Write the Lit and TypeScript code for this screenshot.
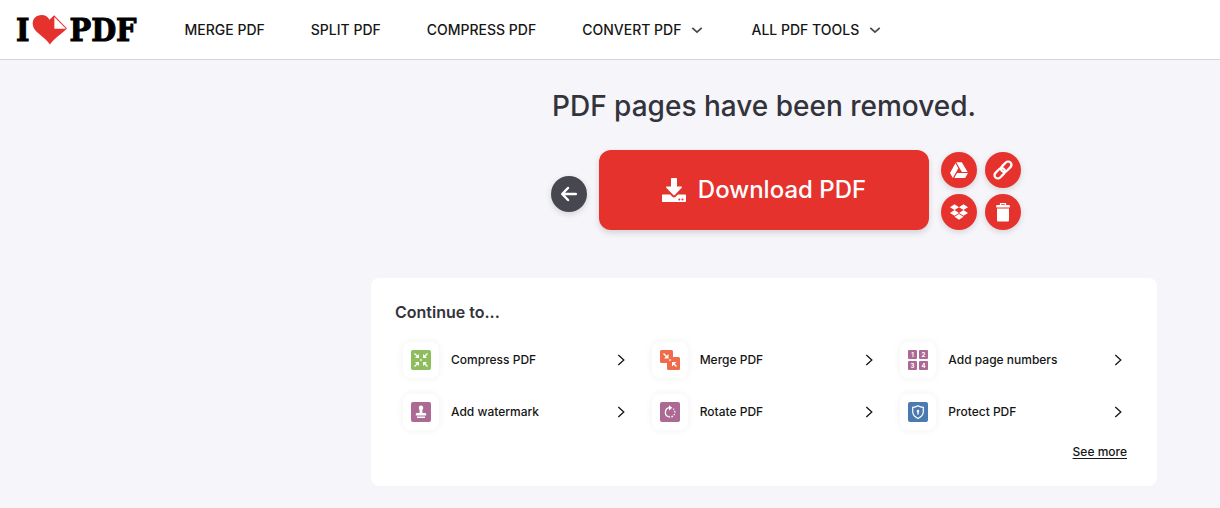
import { LitElement, html, css, svg } from "lit";
import { customElement, property } from "lit/decorators.js";

const icons: Record<string, unknown> = {
  compress: svg`
    <rect width="20" height="20" rx="2" fill="#8fbc5d"/>
    <g stroke="#fff" stroke-width="1.3" fill="none">
      <path d="M3.5 3.5 7 7M16.5 3.5 13 7M3.5 16.5 7 13M16.5 16.5 13 13"/>
    </g>
    <g fill="#fff">
      <path d="M8 4v4H4zM12 4v4h4zM8 16v-4H4zM12 16v-4h4z"/>
      <rect x="9.2" y="9.2" width="1.6" height="1.6"/>
    </g>`,
  merge: svg`
    <path d="M1.5 0h10A1.5 1.5 0 0 1 13 1.5V7h5.500A1.5 1.5 0 0 1 20 8.500v10a1.5 1.5 0 0 1-1.5 1.5h-10A1.5 1.5 0 0 1 7 18.500V13H1.5A1.5 1.5 0 0 1 0 11.500v-10A1.5 1.5 0 0 1 1.5 0z" fill="#f06b4c"/>
    <path d="M3.500 3.500 7 7M16.500 16.500 13 13" stroke="#fff" stroke-width="1.4"/>
    <path d="M8.500 4v4.500H4zM12 16.500V12h4.500z" fill="#fff"/>
    <rect x="9.3" y="9.3" width="1.5" height="1.5" fill="#fff"/>`,
  numbers: svg`
    <g fill="#ab6993">
      <rect width="9" height="9" rx="1"/><rect x="11" width="9" height="9" rx="1"/>
      <rect y="11" width="9" height="9" rx="1"/><rect x="11" y="11" width="9" height="9" rx="1"/>
    </g>
    <g class="digits">
      <text x="4.5" y="6.700">1</text><text x="15.5" y="6.700">2</text>
      <text x="4.5" y="17.700">3</text><text x="15.5" y="17.700">4</text>
    </g>`,
  watermark: svg`
    <rect width="20" height="20" rx="2" fill="#ab6993"/>
    <path d="M10 3.600a2.200 2.200 0 0 1 2.200 2.300c0 1-.8 1.500-.8 2.500v2.700h2.600a1.200 1.200 0 0 1 1.200 1.200v1.300H4.800v-1.300A1.200 1.200 0 0 1 6 11.100h2.600V8.400c0-1-.8-1.500-.8-2.500A2.200 2.200 0 0 1 10 3.600zM6 14.400h8v1.500H6z" fill="#fff"/>`,
  rotate: svg`
    <rect width="20" height="20" rx="2" fill="#ab6993"/>
    <path d="M10.500 5.600A4.700 4.700 0 0 0 8.500 14.700" fill="none" stroke="#fff" stroke-width="1.3"/>
    <path d="M8.500 14.700A4.700 4.700 0 0 0 13.300 6.800" fill="none" stroke="#fff" stroke-width="1.3" stroke-dasharray="1.600 1.300"/>
    <path d="M9 3.200 12.200 5.700 9 8.400z" fill="#fff"/>`,
  protect: svg`
    <rect width="20" height="20" rx="2" fill="#4a7aaf"/>
    <path d="M10 3.800c1.600 1 3.300 1.500 5.300 1.600v4.200c0 3.200-2 5.400-5.300 6.900-3.300-1.500-5.300-3.700-5.300-6.900V5.400C6.700 5.300 8.400 4.800 10 3.800z" fill="none" stroke="#fff" stroke-width="1.2"/>
    <path d="M10 7.800a1.300 1.300 0 0 1 .7 2.400v2.300H9.300v-2.300A1.300 1.300 0 0 1 10 7.800z" fill="#fff"/>`,
};

const tools = [
  ["compress", "Compress PDF"],
  ["merge", "Merge PDF"],
  ["numbers", "Add page numbers"],
  ["watermark", "Add watermark"],
  ["rotate", "Rotate PDF"],
  ["protect", "Protect PDF"],
];

@customElement("tool-link")
export class ToolLink extends LitElement {
  @property() icon = "";
  @property() label = "";

  static styles = css`
    :host { display: block; }
    .tool {
      display: flex;
      align-items: center;
      gap: 12px;
      padding: 8px;
      color: #161616;
      text-decoration: none;
      font-size: 12px;
      font-weight: 500;
      line-height: 20px;
    }
    .tile {
      display: grid;
      place-items: center;
      width: 36px;
      height: 36px;
      border-radius: 8px;
      background: #fff;
      box-shadow: 0 0 8px rgba(0, 0, 0, 0.06);
    }
    .label { flex: 1; }
    .digits {
      fill: #fff;
      font-size: 6px;
      font-weight: 700;
      text-anchor: middle;
    }
  `;

  render() {
    return html`
      <a class="tool" href="#">
        <span class="tile">
          <svg width="20" height="20" viewBox="0 0 20 20" aria-hidden="true">${icons[this.icon]}</svg>
        </span>
        <span class="label">${this.label}</span>
        <svg width="16" height="16" viewBox="0 0 16 16" fill="none" stroke="#161616" stroke-width="1.3" aria-hidden="true">
          <path d="M6.300 3 11.800 8l-5.500 5"/>
        </svg>
      </a>
    `;
  }
}

@customElement("app-root")
export class AppRoot extends LitElement {
  static styles = css`
    :host {
      display: block;
      min-height: 100vh;
      background: #f5f5fa;
      color: #33333b;
      font-family: Inter, "Liberation Sans", sans-serif;
    }
    * { box-sizing: border-box; }
    button { font: inherit; color: inherit; border: 0; cursor: pointer; }
    .header {
      display: flex;
      align-items: center;
      gap: 48px;
      height: 60px;
      padding: 0 16px;
      background: #fff;
      border-bottom: 1px solid #d6d6df;
    }
    .logo {
      display: flex;
      align-items: center;
      gap: 1px;
      color: #000;
      font: 700 32px/36px "DejaVu Serif Condensed", "DejaVu Serif", serif;
      -webkit-text-stroke: 1px #000;
      text-decoration: none;
    }
    .nav {
      display: flex;
      gap: 46px;
      color: #161616;
      font-size: 14px;
      font-weight: 500;
      line-height: 20px;
      white-space: nowrap;
    }
    .nav-item {
      display: flex;
      align-items: center;
      gap: 8px;
      padding: 0;
      background: none;
      color: inherit;
      text-decoration: none;
    }
    .main {
      margin-left: 308px;
      padding: 28px 24px 22px;
    }
    .title {
      margin: 0 0 26px;
      text-align: center;
      font-size: 28px;
      font-weight: 500;
      line-height: 36px;
    }
    .actions {
      display: grid;
      grid-template-columns: 1fr auto 1fr;
      gap: 12px;
      align-items: end;
      margin-bottom: 48px;
    }
    .round {
      display: grid;
      place-items: center;
      width: 36px;
      height: 36px;
      padding: 0;
      border-radius: 50%;
      background: #e5322d;
      box-shadow: 0 2px 6px rgba(0, 0, 0, 0.14);
    }
    .back {
      place-self: center end;
      margin-top: 8px;
      background: #47474f;
    }
    .download {
      display: flex;
      align-items: center;
      justify-content: center;
      gap: 12px;
      min-width: 330px;
      height: 80px;
      padding: 0 48px;
      border-radius: 12px;
      background: #e5322d;
      box-shadow: 0 3px 6px rgba(0, 0, 0, 0.14);
      color: #fff;
      font-size: 24px;
      font-weight: 500;
      line-height: 32px;
      text-decoration: none;
    }
    .side {
      display: grid;
      grid-template-columns: auto auto;
      gap: 6px 8px;
      justify-content: start;
    }
    .card {
      max-width: 786px;
      margin: 0 auto;
      padding: 24px;
      border-radius: 8px;
      background: #fff;
    }
    .card-title {
      margin: 0 0 11px;
      font-size: 16px;
      font-weight: 600;
      line-height: 21px;
    }
    .tools {
      display: grid;
      grid-template-columns: repeat(3, 1fr);
      column-gap: 8px;
    }
    .more {
      display: flex;
      justify-content: flex-end;
      padding: 4px 6px 0 0;
      font-size: 12px;
      font-weight: 500;
      line-height: 20px;
    }
    .more-link { color: #161616; text-underline-offset: 2px; }
  `;

  private chevron = html`
    <svg width="16" height="16" viewBox="0 0 16 16" fill="none" stroke="#47474f" stroke-width="1.7" aria-hidden="true">
      <path d="m3.300 5.800 4.700 4.400 4.700-4.400"/>
    </svg>`;

  render() {
    return html`
      <header class="header">
        <a class="logo" href="#" aria-label="I love PDF">
          <span>I</span>
          <svg width="38" height="32" viewBox="30 14 38 32" aria-hidden="true">
            <path d="M50 44.500C47 40 43 37.500 38 33c-3.500-3-5.300-6-5.300-9.500C32.700 18.500 36.500 15 41.500 15c3.800 0 6.500 1.700 8 4.800L54.200 15.300 67 28.500C61.500 34 54 38.500 50 44.500z" fill="#e5322d"/>
            <path d="M54.400 17v11.800h11.500z" fill="#fff"/>
          </svg>
          <span>PDF</span>
        </a>
        <nav class="nav">
          <a class="nav-item" href="#">MERGE PDF</a>
          <a class="nav-item" href="#">SPLIT PDF</a>
          <a class="nav-item" href="#">COMPRESS PDF</a>
          <button class="nav-item" type="button">CONVERT PDF ${this.chevron}</button>
          <button class="nav-item" type="button">ALL PDF TOOLS ${this.chevron}</button>
        </nav>
      </header>

      <main class="main">
        <h1 class="title">PDF pages have been removed.</h1>

        <div class="actions">
          <button class="round back" type="button" aria-label="Back">
            <svg width="20" height="20" viewBox="0 0 20 20" fill="none" stroke="#fff" stroke-width="2.5" stroke-linecap="round" stroke-linejoin="round" aria-hidden="true">
              <path d="M16.800 10H3.500M9 4 3.200 10l5.800 6"/>
            </svg>
          </button>
          <a class="download" href="#">
            <svg width="24" height="24" viewBox="0 0 24 24" fill="#fff" aria-hidden="true">
              <path d="M9.800 0h4.400a.8.800 0 0 1 .8.800V8.500h4.200c.7 0 1 .7.500 1.200l-6.900 7.400a1 1 0 0 1-1.500 0L4.300 9.700C3.800 9.200 4.100 8.500 4.800 8.500H9V.8a.8.800 0 0 1 .8-.8z"/>
              <path fill-rule="evenodd" d="M.8 16.500h7.400l1.900 2a2.600 2.600 0 0 0 3.800 0l1.900-2h7.400a.8.800 0 0 1 .8.800v5.900a.8.800 0 0 1-.8.800H.8a.8.800 0 0 1-.8-.8v-5.900a.8.800 0 0 1 .8-.8zM17.300 20.600a1 1 0 1 0 0 2 1 1 0 0 0 0-2zm3.200 0a1 1 0 1 0 0 2 1 1 0 0 0 0-2z"/>
            </svg>
            Download PDF
          </a>
          <div class="side">
            <button class="round" type="button" aria-label="Save to Google Drive">
              <svg width="18" height="18" viewBox="0 0 512 512" fill="#fff" aria-hidden="true">
                <path d="M339 314.900 175.400 32h161.200l163.600 282.900H339zM201.500 338.500 120.900 480h310.500L512 338.500H201.500zM154.100 67.400 0 338.500 80.600 480 237 208.800 154.100 67.400z"/>
              </svg>
            </button>
            <button class="round" type="button" aria-label="Share link">
              <svg width="20" height="20" viewBox="0 0 20 20" fill="none" stroke="#fff" stroke-width="2.3" aria-hidden="true">
                <g transform="rotate(-45 10 10)">
                  <rect x="-.6" y="6.700" width="12" height="6.600" rx="3.300"/>
                  <rect x="8.600" y="6.700" width="12" height="6.600" rx="3.300"/>
                </g>
              </svg>
            </button>
            <button class="round" type="button" aria-label="Save to Dropbox">
              <svg width="18" height="18" viewBox="0 0 528 512" fill="#fff" aria-hidden="true">
                <path d="M264.400 116.300l-132 84.300 132 84.300-132 84.300L0 284.100l132.300-84.300L0 116.300 132.300 32l132.100 84.300zM131.600 395.700l132-84.300 132 84.300-132 84.300-132-84.300zm132.800-111.600l132-84.300-132-83.600L395.700 32 528 116.300l-132.300 84.300L528 284.800l-132.300 84.300-131.300-85z"/>
              </svg>
            </button>
            <button class="round" type="button" aria-label="Delete">
              <svg width="20" height="20" viewBox="0 0 20 20" fill="#fff" aria-hidden="true">
                <path d="M7.500 3.200V1.600h5v1.600" fill="none" stroke="#fff" stroke-width="1.2"/>
                <path d="M3.800 3h12.400a.6.600 0 0 1 .6.600v1.800H3.200V3.600a.6.600 0 0 1 .6-.6zM4 6.600h12v12a1 1 0 0 1-1 1H5a1 1 0 0 1-1-1z"/>
              </svg>
            </button>
          </div>
        </div>

        <section class="card">
          <h2 class="card-title">Continue to...</h2>
          <div class="tools">
            ${tools.map(([icon, label]) => html`<tool-link .icon=${icon} .label=${label}></tool-link>`)}
          </div>
          <div class="more"><a class="more-link" href="#">See more</a></div>
        </section>
      </main>
    `;
  }
}
